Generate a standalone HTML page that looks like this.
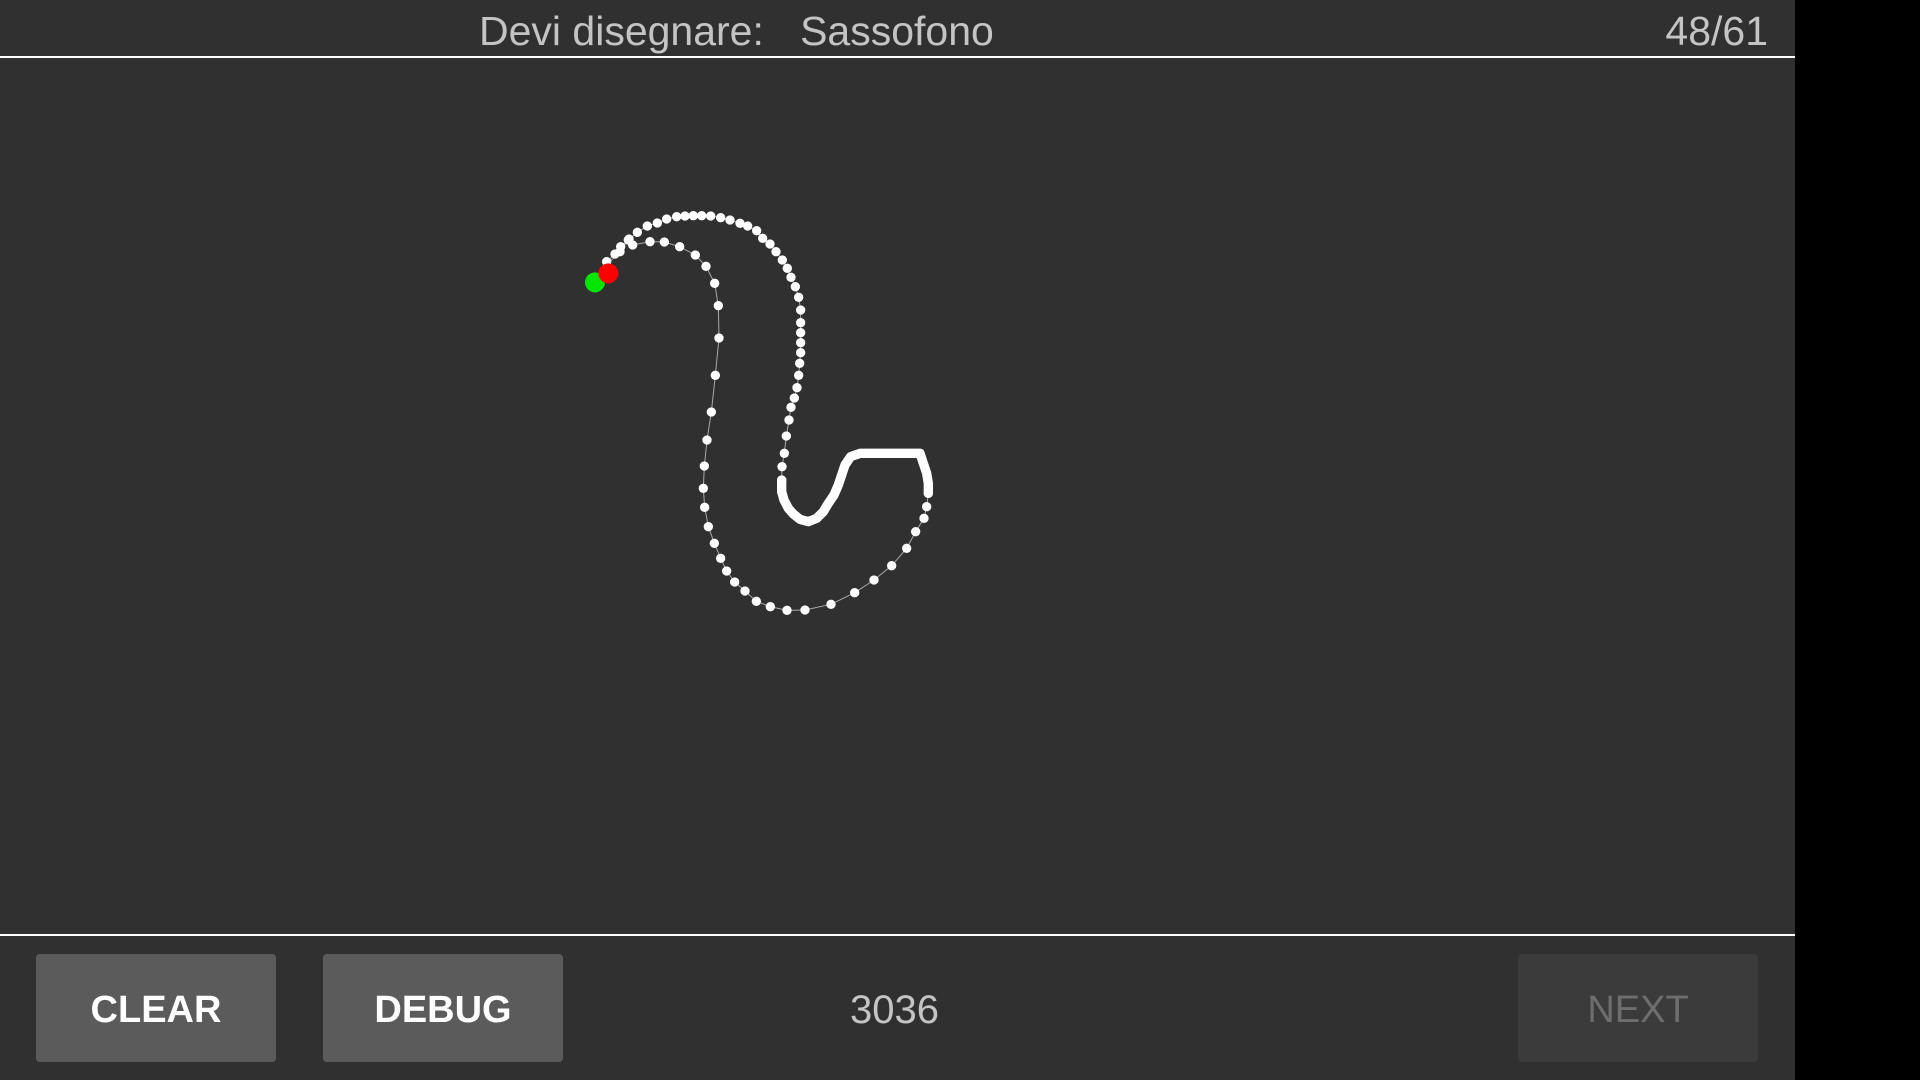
<!DOCTYPE html>
<html><head><meta charset="utf-8"><style>
html,body{margin:0;padding:0;width:1920px;height:1080px;background:#000;overflow:hidden;font-family:"Liberation Sans",Roboto,sans-serif}
#app{position:absolute;left:0;top:0;width:1795px;height:1080px;background:#303030}
.t{position:absolute;color:#c4c4c4;font-size:41px;white-space:nowrap;line-height:1}
.line{position:absolute;left:0;width:1795px;height:2px;background:#fff}
.btn{position:absolute;top:954px;width:240px;height:108px;background:#5b5b5c;border-radius:4px;color:#fff;font-weight:bold;font-size:38px;display:flex;align-items:center;justify-content:center;padding-top:4px;box-sizing:border-box}
</style></head><body><div id="app">
<div class="t" style="left:479px;top:11px">Devi disegnare:&nbsp;&nbsp; <span style="margin-left:2px">Sassofono</span></div>
<div class="t" style="right:27px;top:11px">48/61</div>
<div class="line" style="top:56px"></div>
<div class="line" style="top:934px"></div>
<div class="btn" style="left:36px">CLEAR</div>
<div class="btn" style="left:323px">DEBUG</div>
<div class="btn" style="left:1518px;background:#3b3b3b;color:#6e6e6e;font-weight:normal">NEXT</div>
<div class="t" style="left:850px;top:990px;font-size:40px">3036</div>
<svg style="position:absolute;left:560px;top:190px" width="400" height="430" viewBox="0 0 1200 1290">
<polyline fill="none" stroke="#aaa" stroke-width="3" points="145,250 140,215 165,192 182,170 205,150 232,127 262,108 292,99 320,87 350,80 375,78 400,77 425,77 452,78 482,83 510,90 540,100 563,108 590,122 608,145 630,162 648,185 667,210 682,235 693,262 706,290 716,322 722,360 722,398 722,428 722,458 722,488 719,520 716,556 711,593 703,624 693,652 687,690 679,738 673,790 666,830 665,870 665,905 672,930 685,955 700,972 720,988 745,995 770,985 790,965 805,940 822,915 835,885 845,855 855,825 872,800 900,790 930,790 960,790 990,790 1020,790 1050,790 1080,790 1090,820 1100,850 1105,880 1105,910 1100,950 1092,985 1067,1025 1040,1075 995,1127 942,1170 884,1208 813,1243 735,1260 681,1261 631,1250 589,1234 555,1203 524,1176 500,1143 482,1105 463,1060 445,1010 434,952 430,895 433,828 441,750 454,666 466,556 477,444 475,347 464,280 438,229 406,195 359,170 313,156 270,155 218,165 207,147 180,185 150,215 105,277"/>
<polyline fill="none" stroke="#fff" stroke-width="28" stroke-linejoin="round" stroke-linecap="round" points="665,870 665,905 672,930 685,955 700,972 720,988 745,995 770,985 790,965 805,940 822,915 835,885 845,855 855,825 872,800 900,790 930,790 960,790 990,790 1020,790 1050,790 1080,790 1090,820 1100,850 1105,880 1105,910"/>
</svg>
<svg style="position:absolute;left:560px;top:190px" width="400" height="430" viewBox="0 0 1200 1290" fill="#fff">
<g>
<circle cx="140" cy="215" r="14"/><circle cx="165" cy="192" r="14"/><circle cx="182" cy="170" r="14"/><circle cx="205" cy="150" r="14"/><circle cx="232" cy="127" r="14"/><circle cx="262" cy="108" r="14"/><circle cx="292" cy="99" r="14"/><circle cx="320" cy="87" r="14"/><circle cx="350" cy="80" r="14"/><circle cx="375" cy="78" r="14"/><circle cx="400" cy="77" r="14"/><circle cx="425" cy="77" r="14"/><circle cx="452" cy="78" r="14"/><circle cx="482" cy="83" r="14"/><circle cx="510" cy="90" r="14"/><circle cx="540" cy="100" r="14"/><circle cx="563" cy="108" r="14"/><circle cx="590" cy="122" r="14"/><circle cx="608" cy="145" r="14"/><circle cx="630" cy="162" r="14"/><circle cx="648" cy="185" r="14"/><circle cx="667" cy="210" r="14"/><circle cx="682" cy="235" r="14"/><circle cx="693" cy="262" r="14"/><circle cx="706" cy="290" r="14"/><circle cx="716" cy="322" r="14"/><circle cx="722" cy="360" r="14"/><circle cx="722" cy="398" r="14"/><circle cx="722" cy="428" r="14"/><circle cx="722" cy="458" r="14"/><circle cx="722" cy="488" r="14"/><circle cx="719" cy="520" r="14"/><circle cx="716" cy="556" r="14"/><circle cx="711" cy="593" r="14"/><circle cx="703" cy="624" r="14"/><circle cx="693" cy="652" r="14"/><circle cx="687" cy="690" r="14"/><circle cx="679" cy="738" r="14"/><circle cx="673" cy="790" r="14"/><circle cx="666" cy="830" r="14"/><circle cx="665" cy="870" r="14"/><circle cx="665" cy="905" r="14"/><circle cx="1105" cy="910" r="14"/><circle cx="1100" cy="950" r="14"/><circle cx="1092" cy="985" r="14"/><circle cx="1067" cy="1025" r="14"/><circle cx="1040" cy="1075" r="14"/><circle cx="995" cy="1127" r="14"/><circle cx="942" cy="1170" r="14"/><circle cx="884" cy="1208" r="14"/><circle cx="813" cy="1243" r="14"/><circle cx="735" cy="1260" r="14"/><circle cx="681" cy="1261" r="14"/><circle cx="631" cy="1250" r="14"/><circle cx="589" cy="1234" r="14"/><circle cx="555" cy="1203" r="14"/><circle cx="524" cy="1176" r="14"/><circle cx="500" cy="1143" r="14"/><circle cx="482" cy="1105" r="14"/><circle cx="463" cy="1060" r="14"/><circle cx="445" cy="1010" r="14"/><circle cx="434" cy="952" r="14"/><circle cx="430" cy="895" r="14"/><circle cx="433" cy="828" r="14"/><circle cx="441" cy="750" r="14"/><circle cx="454" cy="666" r="14"/><circle cx="466" cy="556" r="14"/><circle cx="477" cy="444" r="14"/><circle cx="475" cy="347" r="14"/><circle cx="464" cy="280" r="14"/><circle cx="438" cy="229" r="14"/><circle cx="406" cy="195" r="14"/><circle cx="359" cy="170" r="14"/><circle cx="313" cy="156" r="14"/><circle cx="270" cy="155" r="14"/><circle cx="218" cy="165" r="14"/><circle cx="207" cy="147" r="14"/><circle cx="180" cy="185" r="14"/>
</g>
<circle cx="105" cy="277" r="30" fill="#00e600"/>
<circle cx="145" cy="250" r="30" fill="#ff0000"/>
</svg>
</div></body></html>
